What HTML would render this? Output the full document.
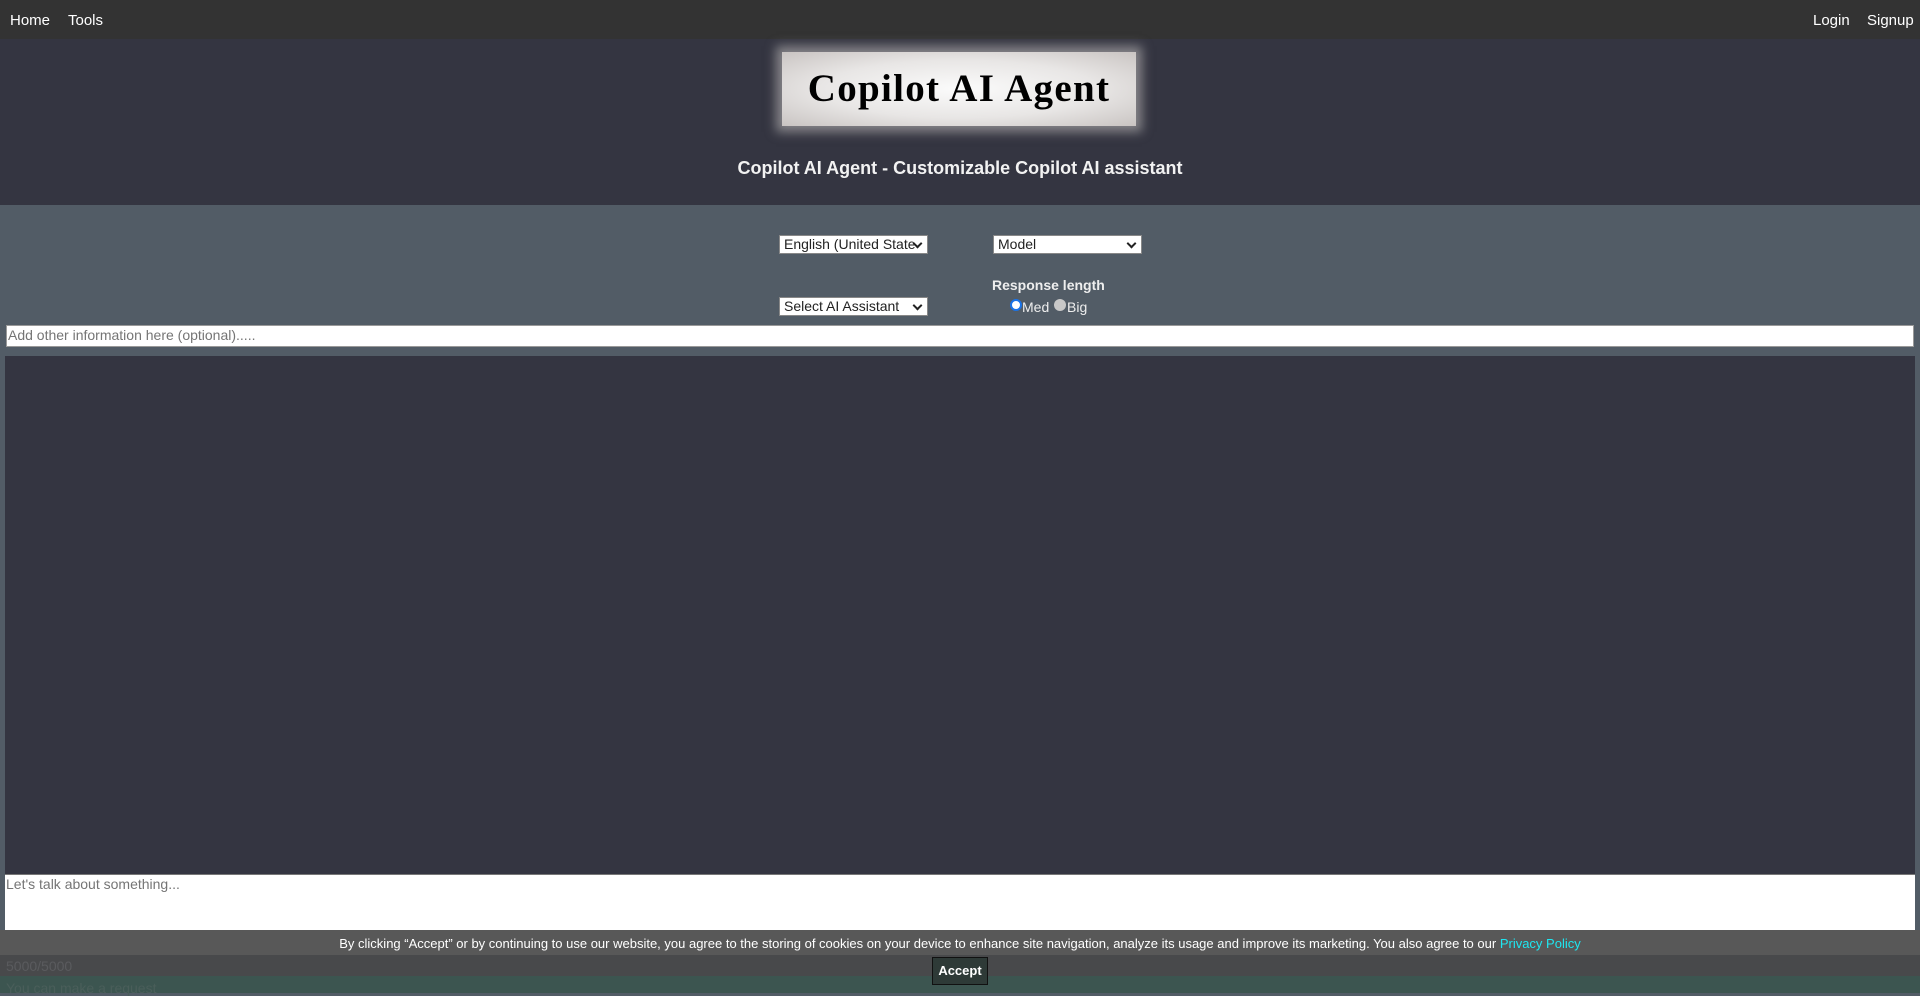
<!DOCTYPE html>
<html><head><meta charset="utf-8"><style>
*{box-sizing:border-box;margin:0;padding:0}
body{width:1920px;height:993px;overflow:hidden;background:#525c66;font-family:"Liberation Sans",Arial,sans-serif;position:relative}
.a{position:absolute}
.nav{left:0;top:0;width:1920px;height:39px;background:#333333;color:#fff;font-size:15px}
.nav span{position:absolute;top:12px}
.hdr{left:0;top:39px;width:1920px;height:166px;background:#343541}
.logo{left:782px;top:52px;width:354px;height:74px;background:radial-gradient(ellipse at center,#fbfbfb 0%,#e8e6e5 55%,#c9c4c2 100%);box-shadow:0 0 10px 6px rgba(200,196,194,.55);font-family:"Liberation Serif",Georgia,serif;font-weight:bold;font-size:39px;letter-spacing:1.3px;text-align:center;line-height:74px;color:#000}
.sub{left:0;top:158px;width:1920px;text-align:center;color:#f2f2f2;font-weight:bold;font-size:18px}
.sel{background:#fff;border:1px solid #888;font-size:14px;color:#222;height:19px;line-height:17px;padding-left:4px;width:149px;overflow:hidden;white-space:nowrap}
.sel:after{content:"";position:absolute;right:6px;top:4px;width:5px;height:5px;border-right:2px solid #222;border-bottom:2px solid #222;transform:rotate(45deg);background:#fff}
.ta{background:#fff;border:1px solid #999;font-size:14px;color:#757575;padding:1px 1px}
</style></head><body>
<div class="a nav"><span style="left:10px">Home</span><span style="left:68px">Tools</span><span style="left:1813px">Login</span><span style="left:1867px">Signup</span></div>
<div class="a hdr"></div>
<div class="a logo">Copilot AI Agent</div>
<div class="a sub">Copilot AI Agent - Customizable Copilot AI assistant</div>
<div class="a sel" style="left:779px;top:235px">English (United State</div>
<div class="a sel" style="left:993px;top:235px">Model</div>
<div class="a sel" style="left:779px;top:297px">Select AI Assistant</div>
<div class="a" style="left:992px;top:277px;color:#eee;font-weight:bold;font-size:14px">Response length</div>
<div class="a" style="left:1010px;top:299px;width:12px;height:12px;border-radius:50%;border:2px solid #1a73e8;background:#fff"></div>
<div class="a" style="left:1022px;top:299px;color:#eee;font-size:14px">Med</div>
<div class="a" style="left:1054px;top:299px;width:12px;height:12px;border-radius:50%;background:#c8c8c8"></div>
<div class="a" style="left:1067px;top:299px;color:#eee;font-size:14px">Big</div>
<div class="a ta" style="left:6px;top:325px;width:1908px;height:22px;line-height:17px">Add other information here (optional).....</div>
<div class="a" style="left:5px;top:356px;width:1910px;height:520px;background:#343541"></div>
<div class="a ta" style="left:5px;top:874px;width:1910px;height:57px;border:none;border-top:1px solid #777">Let's talk about something...</div>
<div class="a" style="left:0;top:930px;width:1920px;height:25px;background:#585858;color:#fff;font-size:13px;text-align:center;line-height:27px">By clicking “Accept” or by continuing to use our website, you agree to the storing of cookies on your device to enhance site navigation, analyze its usage and improve its marketing. You also agree to our <span style="color:#1ee6f0">Privacy Policy</span></div>
<div class="a" style="left:0;top:955px;width:1920px;height:21px;background:#48494b"></div>
<div class="a" style="left:6px;top:958px;color:#5a5b5e;font-size:14px">5000/5000</div>
<div class="a" style="left:0;top:976px;width:1920px;height:17px;background:#3c5550"></div>
<div class="a" style="left:6px;top:980px;color:#4a5e5a;font-size:14px">You can make a request</div>
<div class="a" style="left:932px;top:957px;width:56px;height:28px;background:#2e3a37;border:1px solid #111;color:#fff;font-weight:bold;font-size:13px;text-align:center;line-height:26px">Accept</div>
</body></html>
